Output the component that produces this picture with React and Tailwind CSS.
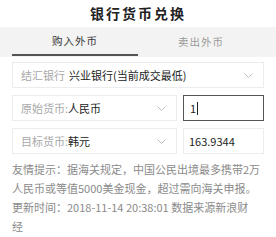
import React from 'react';

const font = { fontFamily: '"Noto Sans CJK SC", "Liberation Sans", sans-serif' };

const Chevron = () => (
  <svg width="9" height="5" viewBox="0 0 9 5" className="shrink-0">
    <polyline points="0.5,0.5 4.5,4.5 8.5,0.5" fill="none" stroke="#bdbdbd" strokeWidth="1" />
  </svg>
);

const SelectBox = ({ label, value, gap = false, className = '' }) => (
  <div className={`flex h-[26px] items-center justify-between border border-[#ececec] bg-white pl-2 pr-[10px] ${className}`}>
    <div className="flex items-center text-[11px] leading-none">
      <span className="text-[#a8a8a8]">{label}</span>
      <span className={`text-[#222] ${gap ? 'ml-[4px]' : ''}`}>{value}</span>
    </div>
    <Chevron />
  </div>
);

export default function App() {
  return (
    <div className="h-[237px] w-[276px] overflow-hidden bg-white" style={font}>
      <div className="flex h-[27px] items-center justify-center text-[14px] font-semibold tracking-[2px] text-[#222]">
        银行货币兑换
      </div>
      <div className="bg-[#f3f3f3] px-3">
        <div className="flex h-[30px]">
          <div className="flex flex-1 flex-col">
            <div className="flex flex-1 items-center justify-center text-[10.5px] text-[#333] tracking-[1px]">购入外币</div>
            <div className="mb-[1px] h-[2px] bg-[#555]" />
          </div>
          <div className="flex flex-1 items-center justify-center text-[10.5px] text-[#999] tracking-[1px]">卖出外币</div>
        </div>
      </div>
      <div className="flex flex-col gap-[7px] px-3 pt-[5px]">
        <SelectBox label="结汇银行" value="兴业银行(当前成交最低)" gap />
        <div className="flex gap-[6px]">
          <SelectBox label="原始货币:" value="人民币" className="flex-1" />
          <div className="flex h-[26px] w-[81px] items-center border border-[#555] pl-[6px] text-[11px] text-[#222]">
            1<span className="ml-[1px] h-[13px] w-[1px] bg-[#222]" />
          </div>
        </div>
        <div className="flex gap-[6px]">
          <SelectBox label="目标货币:" value="韩元" className="flex-1" />
          <div className="flex h-[26px] w-[81px] items-center border border-[#ececec] pl-[5px] text-[11px] text-[#222]">
            163.9344
          </div>
        </div>
      </div>
      <p className="mt-[6px] px-3 text-[11px] leading-[19px] text-[#8a8a8a]">
        友情提示：据海关规定，中国公民出境最多携带2万人民币或等值5000美金现金，超过需向海关申报。更新时间：2018-11-14 20:38:01 数据来源新浪财<br />经
      </p>
    </div>
  );
}
